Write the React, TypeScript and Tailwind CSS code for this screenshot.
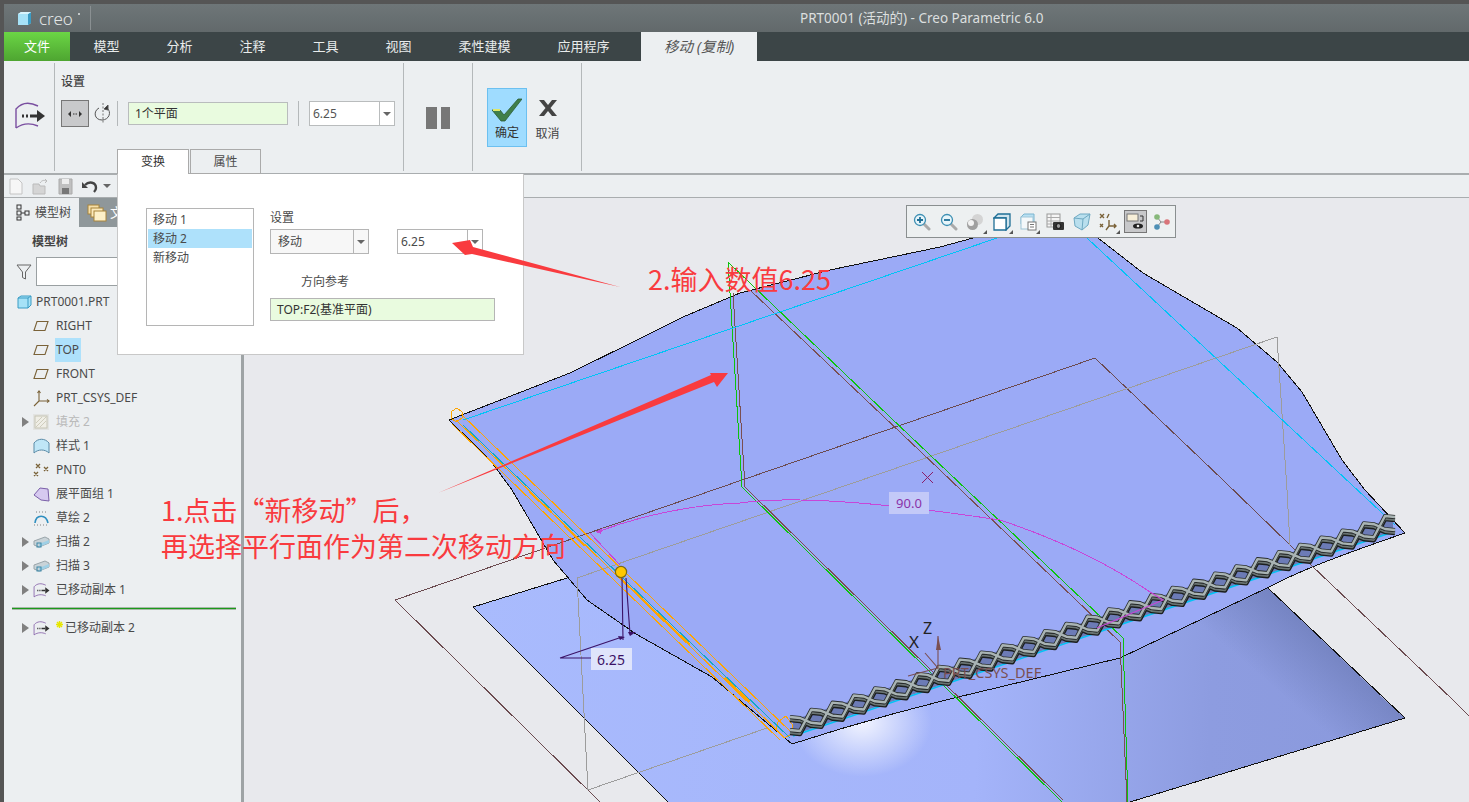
import type { ReactNode } from 'react';

const tabs = ['模型', '分析', '注释', '工具', '视图', '柔性建模', '应用程序'];

// zigzag along the mesh edge, phase flips give the diamond pattern
function meshLine(phase: number, dy: number) {
  const pts: string[] = [];
  const x0 = 795;
  const y0 = 724;
  const x1 = 1390;
  const y1 = 523;
  const steps = 28;
  for (let i = 0; i <= steps; i++) {
    const t = i / steps;
    const up = (i + phase) % 2 === 0;
    const off = up ? -7 : 6;
    const x = x0 + (x1 - x0) * t;
    const y = y0 + (y1 - y0) * t + off + dy;
    pts.push(`${(x - 5).toFixed(1)},${y.toFixed(1)}`);
    pts.push(`${(x + 5).toFixed(1)},${(y + 1).toFixed(1)}`);
  }
  return pts.join(' ');
}

function Caret() {
  return <div className="w-0 h-0 border-l-[4px] border-r-[4px] border-t-[4px] border-l-transparent border-r-transparent border-t-[#666]" />;
}

function MoveIcon({ size = 18 }: { size?: number }) {
  return (
    <svg width={size} height={size} viewBox="0 0 32 28" fill="none">
      <path d="M2 26 V7 C8 0 16 0 24 4 M2 26 C9 21 17 21 24 24" stroke="#7a4fa0" strokeWidth="1.4" />
      <path d="M8 14 h2 M12 14 h2 M16 14 h7" stroke="#333" strokeWidth="3" />
      <path d="M23 8 L31 14 L23 20 Z" fill="#333" />
    </svg>
  );
}

function PlaneIcon() {
  return (
    <svg width="16" height="12" viewBox="0 0 16 12" fill="none">
      <path d="M4 1.5 H15 L12 10.5 H1 Z" stroke="#7a6238" strokeWidth="1.1" />
    </svg>
  );
}

function TreeIcon({ kind }: { kind: string }) {
  if (kind === 'plane') return <PlaneIcon />;
  if (kind === 'csys')
    return (
      <svg width="17" height="17" viewBox="0 0 17 17" fill="none" stroke="#7a6238" strokeWidth="1.1">
        <path d="M6 1 V11 H16 M6 11 L1 16" />
        <path d="M4.5 3 L6 1 L7.5 3 M14 9.5 L16 11 L14 12.5" />
      </svg>
    );
  if (kind === 'fill')
    return (
      <svg width="16" height="16" viewBox="0 0 16 16">
        <rect width="16" height="16" fill="#e3e4e2" />
        <rect x="2" y="2" width="12" height="12" fill="#efeee6" stroke="#c6c4b4" />
        <path d="M3 9 L9 3 M3 13 L13 3 M7 13 L13 7" stroke="#cfcdbd" />
      </svg>
    );
  if (kind === 'style')
    return (
      <svg width="17" height="16" viewBox="0 0 17 16">
        <path d="M1 5 C5 0 12 0 16 5 V15 C12 11 5 11 1 15 Z" fill="#bfe6f7" stroke="#5a8aa6" />
      </svg>
    );
  if (kind === 'pnt')
    return (
      <svg width="17" height="14" viewBox="0 0 17 14" fill="none" stroke="#7a6238" strokeWidth="1.3">
        <path d="M3 1 L7 5 M7 1 L3 5 M11 4 L15 8 M15 4 L11 8 M1 9 L5 13 M5 9 L1 13" />
      </svg>
    );
  if (kind === 'flat')
    return (
      <svg width="17" height="15" viewBox="0 0 17 15">
        <path d="M1 8 L7 1 L15 2 L16 14 L8 13 Z" fill="#d6c9f0" stroke="#7a5fa8" />
      </svg>
    );
  if (kind === 'sketch')
    return (
      <svg width="17" height="15" viewBox="0 0 17 15" fill="none">
        <path d="M2 12 C3 3 13 3 15 12" stroke="#2f8fc0" strokeWidth="1.6" />
        <path d="M1 14 h15 M3 1 h11" stroke="#666" strokeWidth="0.8" strokeDasharray="1 2" />
      </svg>
    );
  if (kind === 'sweep')
    return (
      <svg width="17" height="13" viewBox="0 0 17 13">
        <path d="M1 5 L12 1 L16 3 L16 7 L6 11 L1 9 Z" fill="#c9d3d8" stroke="#9aa5aa" />
        <path d="M6 8 L16 4 V7 L6 11 Z" fill="#9fd0e6" />
        <rect x="4" y="7" width="4" height="4" fill="none" stroke="#3b87a8" />
      </svg>
    );
  if (kind === 'move') return <MoveIcon size={17} />;
  return null;
}

function TreeRow({ kind, label, arrow, muted, sel }: { kind: string; label: ReactNode; arrow?: boolean; muted?: boolean; sel?: boolean }) {
  return (
    <div className="h-6 flex items-center pl-[18px]">
      <div className="w-[11px] shrink-0">
        {arrow && <div className="w-0 h-0 border-t-[5px] border-b-[5px] border-l-[7px] border-t-transparent border-b-transparent border-l-[#808080]" />}
      </div>
      <div className="w-[23px] shrink-0 flex items-center"><TreeIcon kind={kind} /></div>
      <span className={`h-6 leading-6 ${sel ? 'bg-[#aee1fb] -ml-[1px] pl-[1px] pr-[2px]' : ''} ${muted ? 'text-[#b9b9b9]' : 'text-[#4a4a4a]'}`}>{label}</span>
    </div>
  );
}

function Sep() {
  return <div className="w-px bg-[#b4b8ba] shrink-0" />;
}

function ToolIcon({ children, corner }: { children: ReactNode; corner?: boolean }) {
  return (
    <div className="relative w-[26.6px] h-[24px] flex items-center justify-center shrink-0">
      {children}
      {corner && <div className="absolute right-[2px] bottom-0 w-0 h-0 border-b-[4px] border-l-[4px] border-b-[#555] border-l-transparent" />}
    </div>
  );
}

function Magnifier({ minus }: { minus?: boolean }) {
  return (
    <svg width="18" height="18" viewBox="0 0 18 18" fill="none">
      <path d="M11 11 L16 16" stroke="#aaa" strokeWidth="3" strokeLinecap="round" />
      <circle cx="7" cy="7" r="5.5" fill="#e7f5fa" stroke="#3d8fb3" strokeWidth="1.3" />
      <path d={minus ? 'M4 7 H10' : 'M4 7 H10 M7 4 V10'} stroke="#1f6f96" strokeWidth="1.8" />
    </svg>
  );
}

function ViewToolbar() {
  return (
    <div className="absolute left-[662px] top-[7px] w-[270px] h-[33px] bg-[#edf0f1] border border-[#8a8f90] flex items-center pl-[2px]">
      <ToolIcon><Magnifier /></ToolIcon>
      <ToolIcon><Magnifier minus /></ToolIcon>
      <ToolIcon corner>
        <svg width="18" height="18" viewBox="0 0 18 18">
          <circle cx="11.5" cy="6.5" r="5.5" fill="#d4d4d4" />
          <circle cx="6.5" cy="11.5" r="5.5" fill="#a0a0a0" />
          <circle cx="5" cy="10" r="3" fill="#f2f2f2" />
        </svg>
      </ToolIcon>
      <ToolIcon corner>
        <svg width="18" height="18" viewBox="0 0 18 18" fill="#fff" stroke="#1f6f96" strokeWidth="1.3">
          <path d="M1 5 L5 1 H17 V13 L13 17 V5 Z" fill="#cfe4ee" />
          <path d="M1 5 H13 V17 H1 Z" />
        </svg>
      </ToolIcon>
      <ToolIcon corner>
        <svg width="18" height="18" viewBox="0 0 18 18">
          <path d="M1 4 L4 1 H14 V11 H1 Z" fill="#b8e0f2" stroke="#7ab4cf" />
          <rect x="1" y="4" width="12" height="12" fill="#f4f8fa" stroke="#9fc6d8" />
          <rect x="8" y="9" width="8" height="8" fill="#fff" stroke="#777" />
          <path d="M10 11.5 H14 M10 14 H14" stroke="#777" />
        </svg>
      </ToolIcon>
      <ToolIcon>
        <svg width="18" height="18" viewBox="0 0 18 18">
          <rect x="1" y="1" width="13" height="13" fill="#f5f5f5" stroke="#999" />
          <path d="M1 4.5 H14 M1 8 H14 M1 11 H14 M5 1 V14" stroke="#aaa" />
          <rect x="7" y="9" width="11" height="8" rx="1" fill="#333" />
          <circle cx="12.5" cy="13" r="2.4" fill="#999" stroke="#111" />
        </svg>
      </ToolIcon>
      <ToolIcon>
        <svg width="18" height="18" viewBox="0 0 18 18">
          <path d="M1 5 L7 1 H17 L15 12 L9 17 L2 13 Z" fill="#b9dfee" stroke="#6fa9c2" />
          <path d="M1 5 L10 6 L17 1 M10 6 L9 17" fill="none" stroke="#6fa9c2" />
        </svg>
      </ToolIcon>
      <ToolIcon corner>
        <svg width="18" height="18" viewBox="0 0 18 18" fill="none" stroke="#7a6238" strokeWidth="1.4">
          <path d="M1 1 L5 5 M5 1 L1 5 M10 1 L8 5 M1 11 L4 14 M4 11 L1 14" />
          <path d="M10 7 V13 H17 M10 13 L7 17 M15 11 L17 13 L15 15" />
        </svg>
      </ToolIcon>
      <div className="w-[23px] h-[23px] mx-[2px] bg-[#c7c8ca] border border-[#777] flex items-center justify-center shrink-0">
        <svg width="19" height="17" viewBox="0 0 19 17">
          <rect x="1" y="1" width="11" height="7" fill="#f7efd8" stroke="#777" />
          <path d="M14 3 H17 V8 M14 8 H17" stroke="#333" fill="none" />
          <ellipse cx="12" cy="13" rx="5" ry="2.6" fill="#222" />
          <circle cx="12" cy="13" r="1.3" fill="#eee" />
        </svg>
      </div>
      <ToolIcon>
        <svg width="18" height="18" viewBox="0 0 18 18">
          <path d="M4 4 L8 9 L4 14 M8 9 H14" stroke="#888" fill="none" />
          <circle cx="4" cy="4" r="2.8" fill="#86b87a" />
          <circle cx="14" cy="9" r="2.8" fill="#d9757a" />
          <circle cx="4" cy="14" r="2.8" fill="#4d8fb5" />
        </svg>
      </ToolIcon>
    </div>
  );
}

function Scene() {
  return (
    <svg className="block w-full h-full" viewBox="244 198 1225 604" fill="none">
      <defs>
        <linearGradient id="lower" x1="470" y1="600" x2="1400" y2="640" gradientUnits="userSpaceOnUse">
          <stop offset="0" stopColor="#a9bbfd" />
          <stop offset="0.55" stopColor="#a4b4fa" />
          <stop offset="0.8" stopColor="#8d9ce0" />
          <stop offset="1" stopColor="#8a99dc" />
        </linearGradient>
        <linearGradient id="shade" x1="1230" y1="650" x2="1290" y2="580" gradientUnits="userSpaceOnUse">
          <stop offset="0" stopColor="#6d7cb8" stopOpacity="0" />
          <stop offset="1" stopColor="#6d7cb8" stopOpacity="0.95" />
        </linearGradient>
        <radialGradient id="glow">
          <stop offset="0" stopColor="#ffffff" stopOpacity="0.85" />
          <stop offset="1" stopColor="#ffffff" stopOpacity="0" />
        </radialGradient>
      </defs>

      {/* lower surface */}
      <path d="M473,607 L567,578 L1000,500 L1268,588 L1385,700 L1405,718 L1130,802 L668,802 Z" fill="url(#lower)" />
      <path d="M1000,690 L1268,588 L1385,700 L1405,718 L1240,770 Z" fill="url(#shade)" />
      <ellipse cx="862" cy="722" rx="70" ry="55" fill="url(#glow)" />

      <g shapeRendering="crispEdges">
        <path d="M473,607 L567,578 M473,607 L668,802 M1268,588 L1405,718 L1130,802" stroke="#111" strokeWidth="1" />

        {/* brown datum, behind-left part */}
        <path d="M395,600 L1095,358 M395,600 L600,802" stroke="#6b4b50" strokeWidth="1" />

        {/* upper surface */}
        <path
          d="M449,420 L570,373 L637,340 L683,317 L740,293 L830,270 L940,247 L1010,228 L1098,238 L1143,273 L1237,328 L1277,362 L1302,392 L1342,460 L1365,490 L1405,533 C1350,552 1300,570 1267,588 L1120,658 L1000,687 C930,703 860,722 792,744 L712,677 L636,634 L587,600 L553,560 L512,490 L490,460 Z"
          fill="#9baaf6"
          stroke="#111"
          strokeWidth="1"
        />

        {/* datum lines over the surface */}
        <path d="M395,600 L1095,358 L1223,480 L1290,545 L1453,700 L1469,716" stroke="#6b4b50" strokeWidth="1" />
        <path d="M395,600 L600,802" stroke="#6b4b50" strokeWidth="1" />
        <path d="M577,578 L1277,337 L1287,490 L1290,545 M577,578 L588,790 L767,728" stroke="#9c9c9c" strokeWidth="1" />
        <path d="M733,293 L745,487 L1063,800 M750,290 L940,470 L1120,642 L1127,802" stroke="#7a4f52" strokeWidth="1" />
        <path d="M728,262 L730,293 L742,487 L1062,802 M728,262 L890,417 L1123,638 L1128,802" stroke="#0cc40c" strokeWidth="1" />

        {/* cyan border of the quilt */}
        <path d="M463,420 L1000,237 M1087,238 L1395,525" stroke="#00c4f5" strokeWidth="1" />

        {/* magenta arc */}
        <path d="M590,533 L620,565 M597,532 C640,516 690,505 740,503 C800,494 900,505 1000,520 C1060,540 1110,565 1147,590 L1163,600 L1100,622" stroke="#c746d8" strokeWidth="1" />
        <path d="M595,532 L603,528 L601,534 Z" fill="#c746d8" />
        <path d="M922,472 L933,483 M933,472 L922,483" stroke="#8a1f6a" strokeWidth="1" />

        {/* orange edge handles */}
        <path d="M456,420 L785,738 M461,414 L792,733 M452,424 L780,740" stroke="#ffa500" strokeWidth="1" />
        <path d="M620,578 L690,645 M530,492 L552,513 M565,526 L585,546 M640,597 L665,622 M725,678 L750,702" stroke="#ffa500" strokeWidth="2" />
        <path d="M452,411 L457,408 L462,412 L462,418 L456,422 L451,418 Z" stroke="#ffa500" />
        <path d="M778,722 L786,716 L792,724 L792,734 L784,738 L776,730 Z" stroke="#ffa500" />
        <path d="M463,425 L790,738" stroke="#12a9c4" strokeWidth="1" />
      </g>

      <rect x="889" y="492" width="40" height="22" fill="#c3c9f8" />
      <text x="909" y="508" textAnchor="middle" fontSize="13" fontFamily="'Noto Sans', sans-serif" fill="#8a32a8">90.0</text>

      {/* mesh strip */}
      <path d="M793,735 L1393,532 L1393,518 L793,720 Z" fill="#6c7bb6" />
      <path d="M793,736 L1393,532" stroke="#00c4f5" strokeWidth="1.5" />
      <polyline points={meshLine(0, 3)} stroke="#1c1f1f" strokeWidth="4.6" strokeLinejoin="round" />
      <polyline points={meshLine(1, 3)} stroke="#1c1f1f" strokeWidth="4.6" strokeLinejoin="round" />
      <polyline points={meshLine(0, 3)} stroke="#6a7473" strokeWidth="1.8" strokeLinejoin="round" />
      <polyline points={meshLine(1, 3)} stroke="#6a7473" strokeWidth="1.8" strokeLinejoin="round" />
      <polyline points={meshLine(0, 0)} stroke="#2a2e2e" strokeWidth="4" strokeLinejoin="round" />
      <polyline points={meshLine(1, 0)} stroke="#2a2e2e" strokeWidth="4" strokeLinejoin="round" />
      <polyline points={meshLine(0, 0)} stroke="#a9b4b4" strokeWidth="2.4" strokeLinejoin="round" />
      <polyline points={meshLine(1, 0)} stroke="#a9b4b4" strokeWidth="2.4" strokeLinejoin="round" />
      <path d="M1097,628 L1163,600 L1150,592" stroke="#c746d8" strokeWidth="1.2" />

      {/* dimension */}
      <path d="M622,578 L623,640 M626,578 L630,634 M560,658 L622,637 M560,658 L592,658" stroke="#3b1266" strokeWidth="1.1" />
      <path d="M618,636 L625,637 L620,640 Z M628,632 L636,632 L630,636 Z" fill="#3b1266" />
      <rect x="591" y="648" width="41" height="22" fill="#dfe4fb" />
      <text x="611" y="665" textAnchor="middle" fontSize="14" fontFamily="'Noto Sans', sans-serif" fill="#3b1266">6.25</text>
      <circle cx="621" cy="572" r="5.6" fill="#ffc800" stroke="#7a6a10" strokeWidth="1.2" />

      {/* csys */}
      <path d="M938,636 V668 L925,653 M938,668 L908,676" stroke="#7a4f52" strokeWidth="1.1" />
      <path d="M936,650 H941 L938,636 Z" fill="#7a4f52" />
      <text x="923" y="634" fontSize="16" fontFamily="'Noto Sans', sans-serif" fill="#222">Z</text>
      <text x="909" y="648" fontSize="17" fontFamily="'Noto Sans', sans-serif" fill="#222">X</text>
      <text x="943" y="678" fontSize="14.5" fontFamily="'Noto Sans', sans-serif" fill="#7a4f52">PRT_CSYS_DEF</text>
    </svg>
  );
}

export default function App() {
  return (
    <div className="relative w-[1469px] h-[802px] overflow-hidden bg-[#555] pt-1 pl-1 flex flex-col text-xs text-[#4a4a4a] font-['Noto_Sans','Noto_Sans_CJK_SC',sans-serif]">
      {/* title bar */}
      <div className="h-7 shrink-0 bg-gradient-to-b from-[#6e7678] to-[#62696b] flex items-center">
        <svg className="ml-[13px]" width="15" height="15" viewBox="0 0 15 15">
          <path d="M1 3 L4 1 H14 V12 L11 14 H1 Z" fill="#a6e2f7" />
          <path d="M11 3 L14 1 V12 L11 14 Z" fill="#3b9cc4" />
          <path d="M1 3 L4 1 H14 L11 3 Z" fill="#d9f4fc" />
        </svg>
        <span className="ml-[7px] w-[39px] text-[17px] leading-none text-[#e3e6e6] font-light">creo</span>
        <div className="w-[2px] h-[2px] rounded-full bg-[#dfe3e3] mb-2" />
        <div className="w-px h-6 bg-[#8a9092] ml-[10px]" />
        <span className="ml-[709px] text-[13.5px] text-[#dcdfdf]">PRT0001 (活动的) - Creo Parametric 6.0</span>
      </div>

      {/* ribbon tabs */}
      <div className="h-[29px] shrink-0 bg-[#3c4547] flex items-stretch text-[13px] text-[#e9ecec]">
        <div className="w-[66px] bg-gradient-to-b from-[#6bd645] to-[#4ea531] flex items-center justify-center text-white">文件</div>
        <div className="flex items-center">
          {tabs.map((t) => (
            <span key={t} className="px-[23.5px]">{t}</span>
          ))}
        </div>
        <div className="ml-[8px] w-[116px] bg-[#eceff1] flex items-center justify-center italic text-[14.5px] text-[#555]">移动 (复制)</div>
      </div>

      {/* ribbon */}
      <div className="h-[112px] shrink-0 bg-[#eceff1] flex pt-[2px] pb-[2px]">
        <div className="w-[50px] shrink-0 flex items-center pl-[10px] pb-[3px]">
          <MoveIcon size={32} />
        </div>
        <Sep />
        <div className="w-[348px] shrink-0 pl-[6px] pt-[11px]">
          <div className="text-xs font-medium text-[#444] h-[16px] leading-4">设置</div>
          <div className="mt-[10px] flex items-center">
            <div className="w-[28px] h-[27px] bg-[#c8c9cb] border border-[#777] flex items-center justify-center">
              <svg width="14" height="6" viewBox="0 0 14 6" fill="#333">
                <path d="M0 3 L3 0 V6 Z M14 3 L11 0 V6 Z M5 2.5 H6.5 V3.5 H5 Z M7.5 2.5 H9 V3.5 H7.5 Z" />
              </svg>
            </div>
            <svg className="ml-[5px]" width="18" height="21" viewBox="0 0 18 21" fill="none" stroke="#555">
              <path d="M9 0 V21" strokeDasharray="2 1.5" strokeWidth="0.8" />
              <path d="M5 5 C-1 8 0 17 8 17 C15 17 18 9 13 5" strokeWidth="1" />
              <path d="M10 6 L14 2 L14 7 Z" fill="#333" />
            </svg>
            <div className="ml-[5px] w-px h-[25px] bg-[#b4b8ba]" />
            <div className="ml-[10px] w-[160px] h-[23px] bg-[#e9fbdf] border border-[#b9bcbd] flex items-center pl-[6px] text-[#333]">1个平面</div>
            <div className="ml-[10px] w-px h-[25px] bg-[#b4b8ba]" />
            <div className="ml-[10px] w-[86px] h-[25px] bg-white border border-[#b9bcbd] flex items-center">
              <span className="flex-1 pl-[3px] text-[#555]">6.25</span>
              <div className="w-[15px] h-full border-l border-[#b9bcbd] flex items-center justify-center"><Caret /></div>
            </div>
          </div>
        </div>
        <Sep />
        <div className="w-[68px] shrink-0 flex items-center justify-center gap-[4px] pt-[1px] pr-[1px]">
          <div className="w-[11px] h-[22px] bg-[#777]" />
          <div className="w-[9px] h-[22px] bg-[#777]" />
        </div>
        <Sep />
        <div className="w-[108px] shrink-0 flex items-start pl-[14px] pt-[25px]">
          <div className="w-[40px] h-[59px] bg-[#9fdcff] border border-[#6cc0f0] flex flex-col items-center pt-[8px]">
            <svg width="30" height="25" viewBox="0 0 30 25">
              <path d="M0 13 H8 L12 18 L26 2 H30 L13 24 H9 Z" fill="#3f7f4a" stroke="#2b5c36" strokeWidth="0.8" />
              <path d="M1 13 H8" stroke="#dfe86a" strokeWidth="2" />
            </svg>
            <span className="mt-[3px] text-[#333]">确定</span>
          </div>
          <div className="ml-[8px] w-[25px] flex flex-col items-center pt-[11px]">
            <svg width="20" height="18" viewBox="0 0 20 18">
              <path d="M1 1 H6 L10 6 L14 1 H19 L12.5 9 L19 17 H14 L10 12 L6 17 H1 L7.5 9 Z" fill="#444" />
            </svg>
            <span className="mt-[9px] text-[#444]">取消</span>
          </div>
        </div>
        <Sep />
      </div>

      {/* quick access */}
      <div className="h-[24px] shrink-0 bg-[#eceff1] border-t-2 border-[#a9adaf] flex items-center pl-[5px] gap-[9px]">
        <svg width="14" height="17" viewBox="0 0 14 17"><path d="M1 1 H9 L13 5 V16 H1 Z" fill="#f6f6f6" stroke="#c4c4c4" /></svg>
        <svg width="17" height="17" viewBox="0 0 17 17"><path d="M1 6 H7 L8 8 H13 V16 H1 Z" fill="#d5d5d5" stroke="#bbb" /><path d="M8 5 C10 2 12 2 14 3 M13 1 L15 3 L13 5" stroke="#bbb" fill="none" /></svg>
        <svg width="15" height="17" viewBox="0 0 15 17"><path d="M1 1 H14 V16 H1 Z" fill="#c0c0c0" stroke="#aaa" /><rect x="4" y="1" width="7" height="5" fill="#eee" /><rect x="4" y="10" width="7" height="6" fill="#777" /></svg>
        <div className="flex items-center gap-[5px]">
          <svg width="16" height="13" viewBox="0 0 16 13" fill="none"><path d="M3 5 C7 1 14 2 14 8 C14 10 13 11 12 12" stroke="#444" strokeWidth="2.4" /><path d="M0 2 L6 8 H0 Z" fill="#444" /></svg>
          <Caret />
        </div>
      </div>

      {/* main */}
      <div className="flex-1 flex min-h-0 border-t border-[#a9adaf]">
        <div className="w-[237px] shrink-0 bg-[#eceff1]">
          <div className="h-[29px] flex">
            <div className="w-[75px] flex items-center pl-[12px] gap-[5px]">
              <svg width="14" height="17" viewBox="0 0 14 17" fill="none" stroke="#333">
                <rect x="1" y="1" width="4" height="4" />
                <rect x="1" y="7" width="4" height="4" />
                <rect x="1" y="13" width="4" height="3" />
                <rect x="9" y="7" width="4" height="4" />
                <path d="M5 9 H9" />
              </svg>
              模型树
            </div>
            <div className="w-[90px] bg-[#8f979a] flex items-center pl-[8px] gap-[3px] text-[13px] text-white">
              <svg width="20" height="18" viewBox="0 0 20 18">
                <rect x="1" y="1" width="11" height="9" fill="#f6dfa8" stroke="#a8843a" />
                <rect x="4" y="4" width="12" height="9" fill="#fbe9bb" stroke="#a8843a" />
                <rect x="7" y="7" width="12" height="10" fill="#fdf0c8" stroke="#a8843a" />
              </svg>
              文
            </div>
          </div>
          <div className="h-[30px] flex items-center pl-[28px] font-semibold text-[#444]">模型树</div>
          <div className="h-[29px] flex items-center pl-[12px] gap-[4px]">
            <svg width="16" height="16" viewBox="0 0 16 16" fill="none" stroke="#666"><path d="M1 1 H15 L9.5 8 V15 L6.5 13.5 V8 Z" /></svg>
            <div className="w-[100px] h-[29px] bg-white border border-[#9aa0a2]" />
          </div>
          <div className="mt-[4px] h-6 flex items-center pl-[13px] gap-[4px]">
            <svg width="15" height="14" viewBox="0 0 15 14">
              <path d="M1 3 L4 1 H14 V10 L11 13 H1 Z" fill="#a6e2f7" stroke="#3b9cc4" />
              <path d="M1 3 H11 V13 M11 3 L14 1" stroke="#3b9cc4" fill="none" />
            </svg>
            <span>PRT0001.PRT</span>
          </div>
          <TreeRow kind="plane" label="RIGHT" />
          <TreeRow kind="plane" label="TOP" sel />
          <TreeRow kind="plane" label="FRONT" />
          <TreeRow kind="csys" label="PRT_CSYS_DEF" />
          <TreeRow kind="fill" label="填充 2" arrow muted />
          <TreeRow kind="style" label="样式 1" />
          <TreeRow kind="pnt" label="PNT0" />
          <TreeRow kind="flat" label="展平面组 1" />
          <TreeRow kind="sketch" label="草绘 2" />
          <TreeRow kind="sweep" label="扫描 2" arrow />
          <TreeRow kind="sweep" label="扫描 3" arrow />
          <TreeRow kind="move" label="已移动副本 1" arrow />
          <div className="mt-[5px] ml-[8px] w-[224px] h-[3px] bg-[#a9b8a9] flex items-center">
            <div className="w-full h-px bg-[#1a9a1a]" />
          </div>
          <div className="mt-[6px]">
            <TreeRow
              kind="move"
              arrow
              label={
                <span className="flex items-center">
                  <svg className="mb-[8px] mr-[2px]" width="7" height="7" viewBox="0 0 7 7" stroke="#e6e600" strokeWidth="1.4">
                    <path d="M3.5 0 V7 M0 3.5 H7 M1 1 L6 6 M6 1 L1 6" />
                  </svg>
                  已移动副本 2
                </span>
              }
            />
          </div>
        </div>
        <div className="w-[3px] shrink-0 bg-[#9ea3a5]" />
        <div className="flex-1 relative bg-[#e8e9ed] min-w-0">
          <Scene />
          <ViewToolbar />
        </div>
      </div>

      {/* dashboard panel */}
      <div className="absolute left-[117px] top-[149px] w-[407px]">
        <div className="flex h-[25px]">
          <div className="w-[72px] bg-white border border-b-0 border-[#aaa] flex items-center justify-center text-[#333]">变换</div>
          <div className="ml-px w-[71px] bg-[#eceff1] border border-[#aaa] flex items-center justify-center">属性</div>
        </div>
        <div className="h-[181px] bg-white border border-t-0 border-[#c8c8c8] flex pl-[28px] pt-[34px]">
          <div className="w-[108px] h-[118px] border border-[#b5b5b5] py-[1px] px-[1px]">
            <div className="h-[19px] leading-[19px] pl-[5px]">移动 1</div>
            <div className="h-[19px] leading-[19px] pl-[5px] bg-[#aee1fb]">移动 2</div>
            <div className="h-[19px] leading-[19px] pl-[5px]">新移动</div>
          </div>
          <div className="ml-[16px]">
            <div className="h-[20px] leading-[20px]">设置</div>
            <div className="flex mt-[1px]">
              <div className="w-[99px] h-[25px] bg-[#f7f7f7] border border-[#b5b5b5] flex items-center">
                <span className="flex-1 pl-[7px]">移动</span>
                <div className="w-[15px] h-full border-l border-[#b5b5b5] flex items-center justify-center"><Caret /></div>
              </div>
              <div className="ml-[28px] w-[86px] h-[25px] bg-white border border-[#b5b5b5] flex items-center">
                <span className="flex-1 pl-[3px]">6.25</span>
                <div className="w-[15px] h-full border-l border-[#b5b5b5] flex items-center justify-center"><Caret /></div>
              </div>
            </div>
            <div className="mt-[18px] ml-[31px] h-[20px] leading-[20px]">方向参考</div>
            <div className="mt-[6px] w-[225px] h-[23px] bg-[#e9fbdf] border border-[#b5b5b5] flex items-center pl-[6px] text-[#333]">TOP:F2(基准平面)</div>
          </div>
        </div>
      </div>

      {/* annotations drawn on top of the screenshot */}
      <svg className="absolute left-0 top-0 pointer-events-none" width="1469" height="802" viewBox="0 0 1469 802">
        <path d="M438,493 L711,375 L710,373 L728,373 L717,387 L714,382 Z" fill="#f93b3f" />
        <path d="M620,287 L473,247 L470,240 L452,243 L465,255 L472,254 Z" fill="#f93b3f" />
      </svg>
      <div className="absolute left-[648px] top-[261px] text-[27px] leading-[36px] text-[#f93b3f] font-['Noto_Sans_CJK_SC','Noto_Sans',sans-serif]">2.输入数值6.25</div>
      <div className="absolute left-[161px] top-[492px] text-[27px] leading-[36px] text-[#f93b3f] font-['Noto_Sans_CJK_SC','Noto_Sans',sans-serif]">
        <div>1.点击“新移动”后，</div>
        <div>再选择平行面作为第二次移动方向</div>
      </div>
    </div>
  );
}
